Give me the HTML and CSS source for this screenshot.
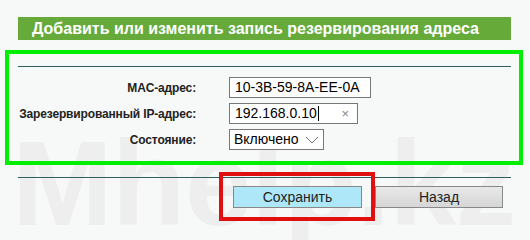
FILE: index.html
```html
<!DOCTYPE html>
<html>
<head>
    <title>Резервирование адреса</title>
    <link rel="stylesheet" href="styles.css">
</head>
<body>
    <div class="page">
        <div class="watermark">Mhelp.kz</div>

        <div class="title">Добавить или изменить запись резервирования адреса</div>

        <div class="box">
            <div class="rule"></div>
            <div class="form">
                <label>MAC-адрес:</label>
                <div class="field mac">10-3B-59-8A-EE-0A</div>

                <label>Зарезервированный IP-адрес:</label>
                <div class="field ip">192.168.0.10<span class="caret"></span><span class="clear">×</span></div>

                <label>Состояние:</label>
                <div class="field select">Включено
                    <svg class="chevron" width="14" height="8" viewBox="0 0 14 8"><path d="M1 1 L7 7 L13 1" fill="none" stroke="#777" stroke-width="1"/></svg>
                </div>
            </div>
        </div>

        <div class="rule bottom"></div>
        <div class="buttons">
            <button class="btn save">Сохранить</button>
            <button class="btn back">Назад</button>
        </div>

        <div class="highlight"></div>
    </div>
</body>
</html>
```

FILE: styles.css
```css
body {
    margin: 0;
    background: #f7f9f9;
    font-family: "Liberation Sans", Arial, sans-serif;
    color: #000;
}
.page {
    position: relative;
    width: 530px;
    height: 240px;
    padding-top: 17px;
    box-sizing: border-box;
    overflow: hidden;
}
.watermark {
    position: absolute;
    left: 12px;
    top: 123px;
    font-size: 121px;
    font-weight: bold;
    color: #eeeeee;
    letter-spacing: -1px;
    line-height: 1;
    z-index: 0;
}
.title {
    position: relative;
    margin: 0 19px 0 18px;
    height: 23px;
    background: #66ab3a;
    color: #fff;
    font-weight: bold;
    font-size: 16px;
    line-height: 23px;
    padding-left: 14px;
    white-space: nowrap;
}
.box {
    position: relative;
    margin: 10px 0 0 5px;
    width: 518px;
    height: 115px;
    box-sizing: border-box;
    border: 4px solid #0e0;
    padding-top: 12px;
}
.rule {
    height: 1px;
    background: #2f5f5a;
    margin-left: 9px;
    width: 493px;
}
.form {
    display: grid;
    grid-template-columns: 187px auto;
    column-gap: 33px;
    row-gap: 5px;
    margin-top: 10px;
    justify-items: start;
    align-items: center;
}
.form label {
    justify-self: end;
    font-weight: bold;
    font-size: 12px;
    letter-spacing: -0.15px;
    color: #222;
    white-space: nowrap;
}
.field {
    box-sizing: border-box;
    height: 21px;
    border: 1px solid #777;
    background: #fff;
    font-size: 14px;
    line-height: 19px;
    padding-left: 5px;
    display: flex;
    align-items: center;
}
.mac { width: 142px; }
.ip { width: 129px; position: relative; }
.caret {
    display: inline-block;
    width: 1px;
    height: 15px;
    background: #000;
    margin-left: 1px;
}
.clear {
    position: absolute;
    right: 8px;
    top: 0;
    color: #888;
    font-size: 13px;
}
.select {
    width: 95px;
    padding-left: 4px;
}
.chevron {
    margin-left: auto;
    margin-right: 4px;
}
.rule.bottom {
    position: relative;
    margin: 12px 0 0 18px;
    background: #2f5f5a;
}
.buttons {
    position: relative;
    display: flex;
    gap: 13px;
    margin: 8px 0 0 233px;
}
.btn {
    box-sizing: border-box;
    width: 129px;
    height: 22px;
    border: 1px solid #888;
    font-family: "Liberation Sans", Arial, sans-serif;
    font-size: 14px;
    color: #222;
    padding: 0;
}
.save { background: #aee8f8; }
.back {
    width: 128px;
    background: linear-gradient(#e8e8e8, #d6d6d6);
}
.highlight {
    position: absolute;
    left: 219px;
    top: 172px;
    width: 156px;
    height: 49px;
    box-sizing: border-box;
    border: 4px solid #e01010;
}
```
